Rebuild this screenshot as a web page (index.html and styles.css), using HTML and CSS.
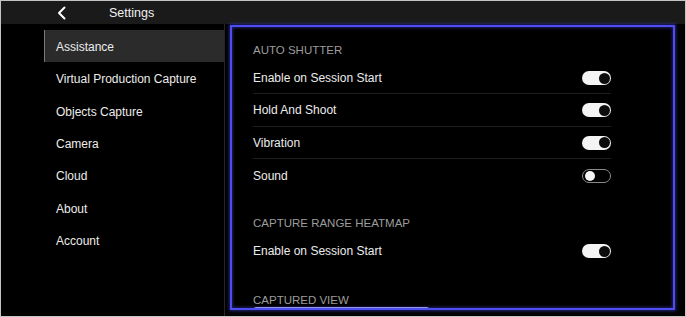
FILE: index.html
```html
<!DOCTYPE html>
<html>
<head>
<meta charset="utf-8">
<link rel="stylesheet" href="styles.css">
</head>
<body>
<div class="screen">
  <header class="topbar">
    <button class="back" aria-label="Back">
      <svg width="10" height="14" viewBox="0 0 10 14"><path d="M7.5 1.5 L2 7 L7.5 12.5" fill="none" stroke="#fff" stroke-width="2" stroke-linecap="round" stroke-linejoin="round"/></svg>
    </button>
    <span class="title">Settings</span>
  </header>
  <div class="main">
    <nav class="sidebar">
      <div class="nav-item active">Assistance</div>
      <div class="nav-item">Virtual Production Capture</div>
      <div class="nav-item">Objects Capture</div>
      <div class="nav-item">Camera</div>
      <div class="nav-item">Cloud</div>
      <div class="nav-item">About</div>
      <div class="nav-item">Account</div>
    </nav>
    <section class="panel">
      <div class="section-title first">AUTO SHUTTER</div>
      <div class="row sep shifted"><span>Enable on Session Start</span><span class="toggle on"></span></div>
      <div class="row sep shifted"><span>Hold And Shoot</span><span class="toggle on"></span></div>
      <div class="row sep shifted"><span>Vibration</span><span class="toggle on"></span></div>
      <div class="row shifted"><span>Sound</span><span class="toggle off"></span></div>
      <div class="section-title second">CAPTURE RANGE HEATMAP</div>
      <div class="row"><span>Enable on Session Start</span><span class="toggle on"></span></div>
      <div class="section-title last">CAPTURED VIEW</div>
      <div class="preview"></div>
    </section>
  </div>
</div>
</body>
</html>
```

FILE: styles.css
```css
* { box-sizing: border-box; }
html, body { margin: 0; padding: 0; background: #000; }
body { font-family: "Liberation Sans", Arial, sans-serif; }

.screen {
  width: 686px;
  height: 317px;
  border: 1px solid #c4c4c4;
  background: #000;
  display: flex;
  flex-direction: column;
  overflow: hidden;
}

.topbar {
  height: 23px;
  flex: none;
  background: #1a1a1a;
  display: flex;
  align-items: center;
  color: #f0f0f0;
}
.back {
  margin-left: 56px;
  width: 10px;
  height: 14px;
  padding: 0;
  border: 0;
  background: none;
  display: flex;
}
.title {
  margin-left: 42px;
  font-size: 12.5px;
}

.main {
  flex: 1;
  display: flex;
  min-height: 0;
}

.sidebar {
  width: 224px;
  flex: none;
  border-right: 1px solid #262626;
  padding: 6px 0 0 43px;
}
.nav-item {
  height: 32.3px;
  display: flex;
  align-items: center;
  padding: 2px 0 0 12px;
  color: #ececec;
  font-size: 12px;
  white-space: nowrap;
}
.nav-item.active {
  background: #2b2b2b;
  border-left: 1px solid #7a7a7a;
  padding-left: 11px;
}

.panel {
  margin: 1px 0 6px 5px;
  width: 445px;
  border: 2px solid #4d4df0;
  box-shadow: 0 0 3px 1px rgba(70, 70, 230, 0.55), inset 0 0 3px 1px rgba(70, 70, 230, 0.45);
  padding: 0 62px 0 21px;
  overflow: hidden;
}

.section-title {
  padding: 26px 0 5px;
  line-height: 14px;
  font-size: 11.5px;
  color: #9c9c9c;
}
.section-title.first { padding-top: 16px; }
.section-title.second { padding-top: 25px; }
.section-title.last { padding-bottom: 0; }

.row {
  height: 32.3px;
  display: flex;
  align-items: center;
  justify-content: space-between;
  color: #ececec;
  font-size: 12px;
}
.row.shifted { padding-top: 1px; }
.row.sep { border-bottom: 1px solid #1e1e1e; }

.toggle {
  width: 29px;
  height: 14px;
  border-radius: 7px;
  position: relative;
  flex: none;
}
.toggle::after {
  content: "";
  position: absolute;
  top: 1.5px;
  width: 11px;
  height: 11px;
  border-radius: 50%;
}
.toggle.on { background: #f4f4f4; }
.toggle.on::after { right: 1.5px; background: #0c0c0c; }
.toggle.off { background: #000; border: 1px solid #8a8a8a; }
.toggle.off::after { left: 1.5px; top: 1px; width: 10px; height: 10px; background: #f4f4f4; }

.preview {
  width: 177px;
  height: 40px;
  border-radius: 4px;
  background: #9898e6;
}
```
